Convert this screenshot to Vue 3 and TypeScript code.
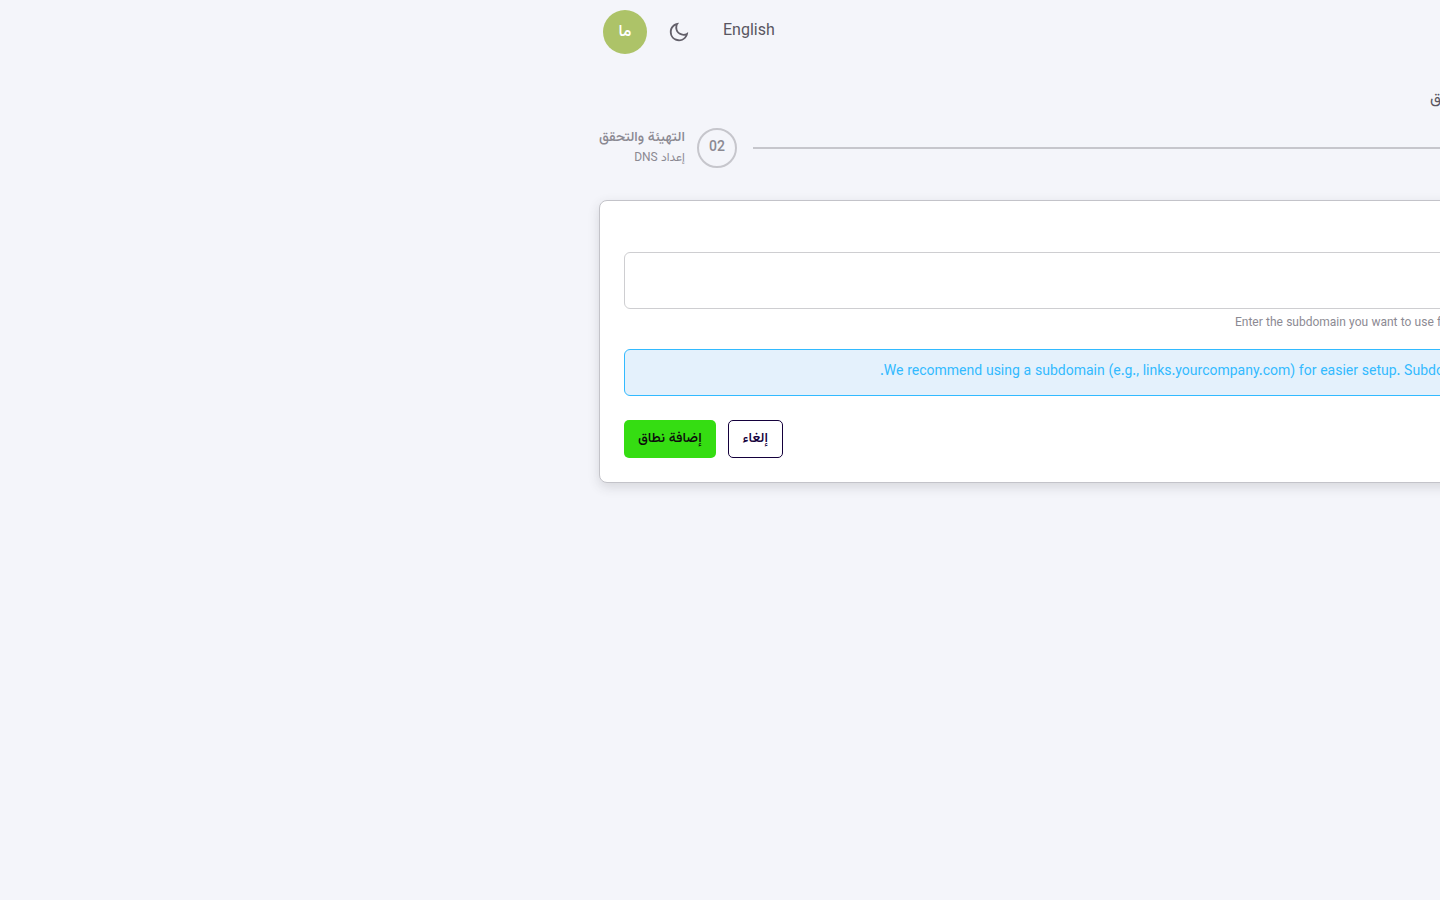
<script setup lang="ts">
import { ref } from 'vue'

interface Step {
  number: string
  title: string
  note: string
}

const firstStep: Step = { number: '01', title: 'إضافة نطاق', note: 'إدخال النطاق' }
const secondStep: Step = { number: '02', title: 'التهيئة والتحقق', note: 'إعداد DNS' }
const domain = ref('')
</script>

<template>
  <div class="page">
    <div class="shell" dir="rtl">
      <header class="topbar">
        <button class="language" type="button">English</button>
        <button class="theme" type="button" aria-label="الوضع الداكن">
          <svg viewBox="0 0 24 24" width="22" height="22" fill="currentColor" aria-hidden="true">
            <path d="M10 7a7 7 0 0 0 12 4.9v.1c0 5.523-4.477 10-10 10S2 17.523 2 12 6.477 2 12 2h.1A6.98 6.98 0 0 0 10 7m-6 5a8 8 0 0 0 15.062 3.762A9 9 0 0 1 8.238 4.938 8 8 0 0 0 4 12" />
          </svg>
        </button>
        <button class="avatar" type="button">ما</button>
      </header>

      <main>
        <h1 class="title">إضافة نطاق</h1>

        <div class="stepper">
          <div class="step active">
            <span class="circle">{{ firstStep.number }}</span>
            <div class="step-text">
              <div class="step-title">{{ firstStep.title }}</div>
              <div class="step-note">{{ firstStep.note }}</div>
            </div>
          </div>
          <div class="connector"></div>
          <div class="step">
            <span class="circle">{{ secondStep.number }}</span>
            <div class="step-text">
              <div class="step-title">{{ secondStep.title }}</div>
              <div class="step-note">{{ secondStep.note }}</div>
            </div>
          </div>
        </div>

        <form class="card" @submit.prevent>
          <label class="label" for="domain">النطاق</label>
          <input id="domain" v-model="domain" class="field" type="text" aria-describedby="domain-help" />
          <p id="domain-help" class="help">Enter the subdomain you want to use for your short links</p>
          <div class="notice" role="note">We recommend using a subdomain (e.g., links.yourcompany.com) for easier setup. Subdomains are easier to configure than root domains.</div>
          <div class="actions">
            <button class="button outlined" type="button">إلغاء</button>
            <button class="button filled" type="submit">إضافة نطاق</button>
          </div>
        </form>
      </main>
    </div>
  </div>
</template>

<style>
body {
  margin: 0;
  background: #f4f5fa;
}
</style>

<style scoped>
.page {
  min-height: 100vh;
  overflow: hidden;
  background: #f4f5fa;
  color: #595661;
  font-family: Vazirmatn, Roboto, "Noto Sans", "DejaVu Sans", sans-serif;
}
.shell {
  width: 100%;
  margin-left: 599px;
}
.topbar {
  display: flex;
  align-items: center;
  justify-content: flex-end;
  height: 64px;
  padding-left: 4px;
}
button {
  box-sizing: border-box;
  font-family: inherit;
  cursor: pointer;
}
.language,
.theme,
.avatar {
  border: 0;
  padding: 0;
  background: transparent;
  color: inherit;
}
.language {
  font-size: 16px;
  line-height: 24px;
}
.theme {
  display: flex;
  margin: 0 33px 0 21px;
  color: #625f69;
}
.avatar {
  width: 44px;
  height: 44px;
  border-radius: 50%;
  background: #adc368;
  color: #fff;
  font-size: 16px;
  font-weight: 500;
}
.title {
  margin: 24px 0 16px;
  padding-left: 831px;
  text-align: left;
  font-size: 16px;
  font-weight: 400;
  line-height: 24px;
}
.stepper {
  display: flex;
  align-items: center;
  gap: 16px;
  height: 40px;
}
.step {
  display: flex;
  align-items: center;
  gap: 12px;
  color: #8b8992;
}
.step.active {
  color: #35dd12;
}
.circle {
  box-sizing: border-box;
  display: flex;
  justify-content: center;
  width: 40px;
  height: 40px;
  border: 2px solid #c6c6cc;
  border-radius: 50%;
  font-size: 14px;
  font-weight: 500;
  line-height: 36px;
}
.active .circle {
  border-color: currentColor;
}
.step-title {
  font-size: 14px;
  font-weight: 500;
  line-height: 20px;
  white-space: nowrap;
}
.step-note {
  font-size: 12px;
  line-height: 20px;
}
.connector {
  flex: 1;
  height: 2px;
  background: #c6c6cc;
}
.card {
  margin-top: 32px;
  padding: 24px;
  border: 1px solid #c3c3c9;
  border-radius: 8px;
  background: #fff;
  box-shadow: 0 4px 12px rgba(58, 53, 65, 0.16);
}
.label {
  display: block;
  height: 27px;
  font-size: 14px;
}
.field {
  box-sizing: border-box;
  display: block;
  width: 100%;
  height: 57px;
  padding: 16px;
  border: 1px solid #ceced1;
  border-radius: 6px;
  background: #fff;
  color: inherit;
  font: inherit;
}
.help {
  margin: 4px 0 16px;
  padding-left: 611px;
  color: #8b8992;
  font-size: 12px;
  line-height: 20px;
  text-align: left;
  white-space: nowrap;
}
.notice {
  padding: 12px 14px 13px 255px;
  border: 1px solid #32baff;
  border-radius: 6px;
  background: #e4f1fc;
  color: #32baff;
  font-size: 14px;
  line-height: 20px;
  text-align: left;
  white-space: nowrap;
}
.actions {
  display: flex;
  justify-content: flex-end;
  gap: 12px;
  margin-top: 24px;
}
.button {
  height: 38px;
  padding: 0 14px;
  border: 0;
  border-radius: 5px;
  font-size: 14px;
  font-weight: 500;
}
.outlined {
  border: 1px solid #14003c;
  background: #fff;
  color: #14003c;
}
.filled {
  background: #35dd12;
  color: #0c0c0c;
}
</style>
